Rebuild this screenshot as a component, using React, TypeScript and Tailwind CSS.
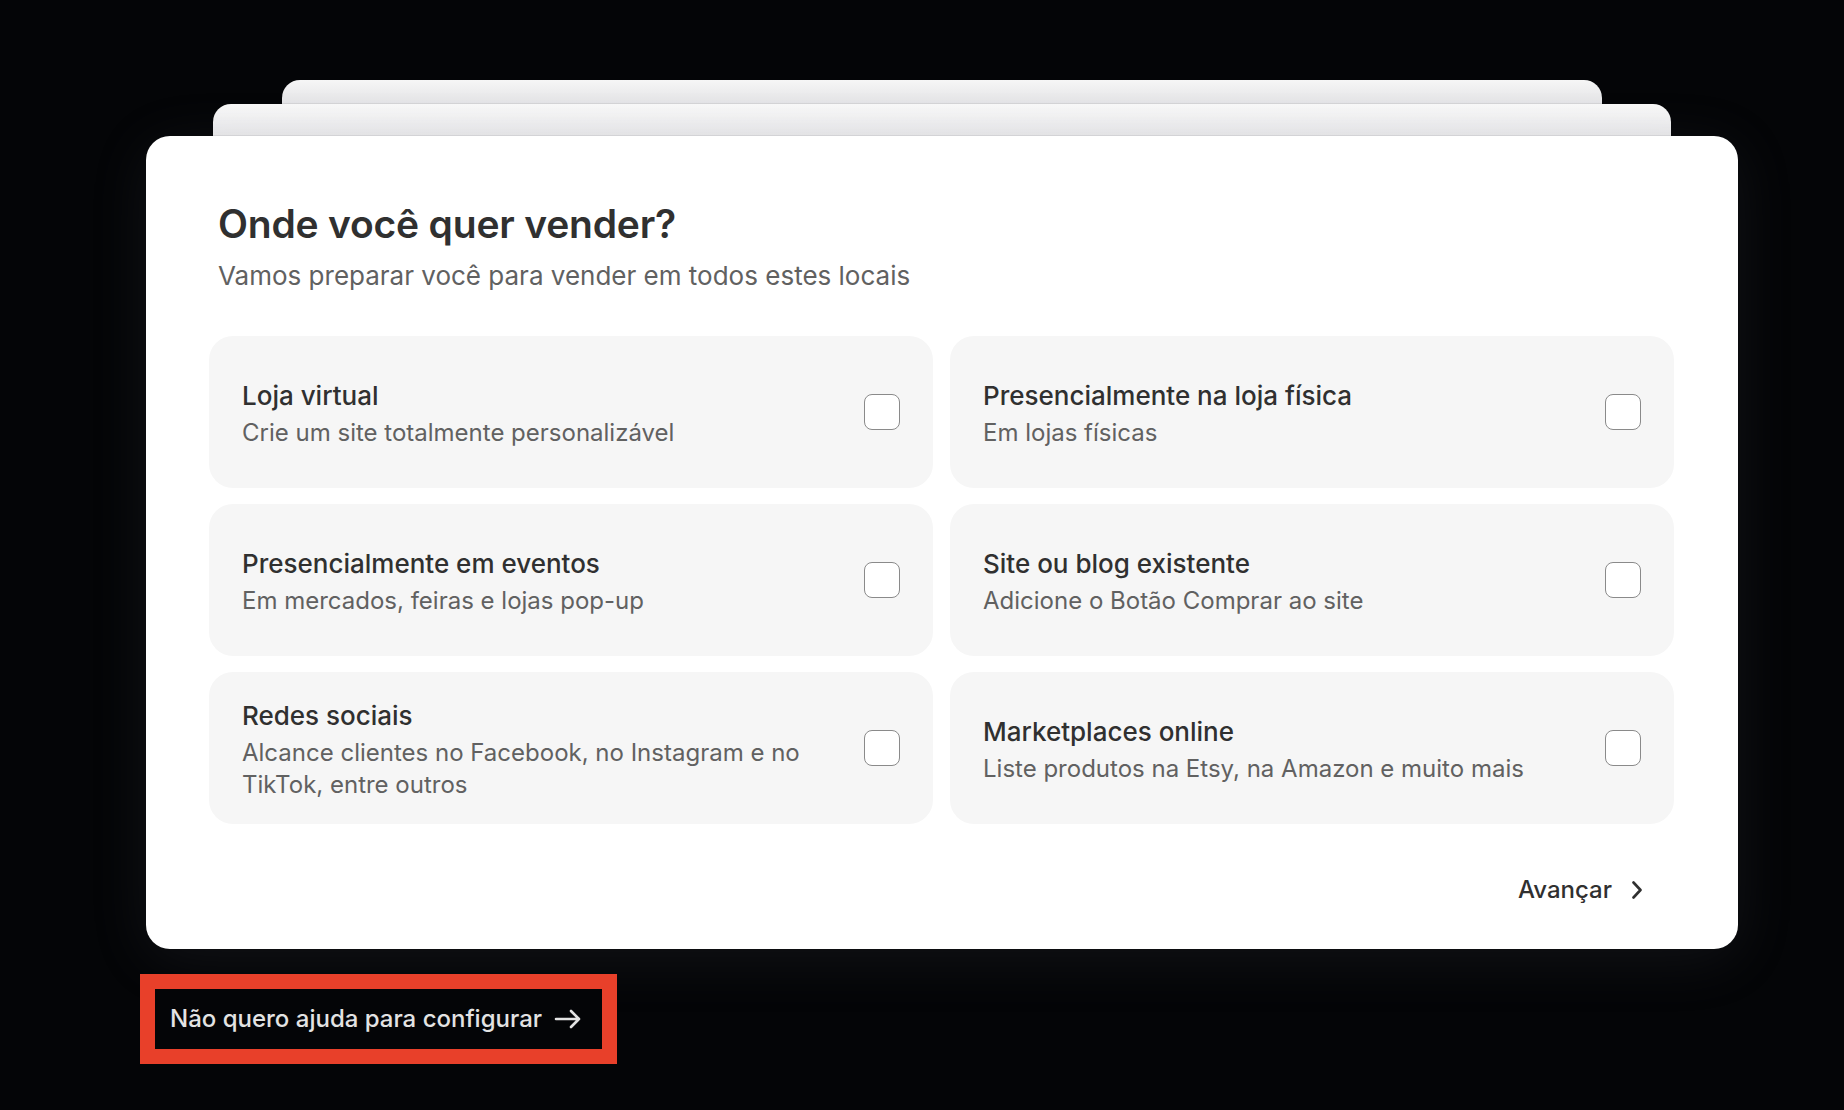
import React from "react";

const options = [
  { title: "Loja virtual", sub: "Crie um site totalmente personalizável" },
  { title: "Presencialmente na loja física", sub: "Em lojas físicas" },
  { title: "Presencialmente em eventos", sub: "Em mercados, feiras e lojas pop-up" },
  { title: "Site ou blog existente", sub: "Adicione o Botão Comprar ao site" },
  { title: "Redes sociais", sub: "Alcance clientes no Facebook, no Instagram e no TikTok, entre outros" },
  { title: "Marketplaces online", sub: "Liste produtos na Etsy, na Amazon e muito mais" },
];

export default function App() {
  return (
    <div
      className="w-full h-[1110px] bg-[#040507] overflow-hidden"
      style={{ fontFamily: "Inter, 'Noto Sans', sans-serif" }}
    >
      <div className="ml-[146px] w-[1592px] pt-[80px]">
        {/* stacked cards behind */}
        <div className="mx-[136px] h-[24px] rounded-t-[18px] bg-gradient-to-b from-[#f6f6f6] to-[#e4e4e6] border-b border-[#d4d4d6]" />
        <div className="mx-[67px] h-[32px] rounded-t-[18px] bg-gradient-to-b from-[#f9f9f9] to-[#e8e8ea] border-b border-[#d8d8da]" />
        {/* main card */}
        <div className="h-[813px] rounded-[24px] bg-white pt-[64px] pl-[63px] pr-[64px] shadow-[0_10px_60px_rgba(120,125,140,0.12)]">
          <div className="pl-[9px]">
            <h1 className="text-[39px] leading-[48px] font-semibold text-[#303030] tracking-[-0.2px]">
              Onde você quer vender?
            </h1>
            <p className="mt-[12px] text-[26px] leading-[32px] text-[#616161]">
              Vamos preparar você para vender em todos estes locais
            </p>
          </div>
          <div className="mt-[44px] grid grid-cols-2 gap-x-[17px] gap-y-[16px]">
            {options.map((o) => (
              <div
                key={o.title}
                className="h-[152px] rounded-[24px] bg-[#f6f6f6] flex items-center justify-between pl-[33px] pr-[33px]"
              >
                <div className="max-w-[585px] pt-[4px]">
                  <div className="text-[26px] leading-[32px] font-medium text-[#303030]">{o.title}</div>
                  <div className="mt-[5px] text-[24px] leading-[32px] text-[#616161]">{o.sub}</div>
                </div>
                <div className="w-[36px] h-[36px] shrink-0 rounded-[8px] border-[1.5px] border-[#8a8a8a] bg-white" />
              </div>
            ))}
          </div>
          <div className="mt-[50px] flex justify-end pr-[31px]">
            <div className="flex items-center gap-[19px] text-[24px] leading-[32px] font-medium text-[#303030]">
              <span>Avançar</span>
              <svg width="12" height="18" viewBox="0 0 12 18" fill="none">
                <path d="M2.5 1.5L9.5 9L2.5 16.5" stroke="#303030" strokeWidth="2.6" strokeLinecap="round" strokeLinejoin="round" />
              </svg>
            </div>
          </div>
        </div>
      </div>
      <div className="ml-[140px] mt-[25px] w-[477px] h-[90px] border-[15px] border-[#e8402a] bg-[#040507] flex items-center pl-[15px]">
        <span className="text-[24px] leading-[32px] font-medium text-[#e3e3e3]">Não quero ajuda para configurar</span>
        <svg className="ml-[12px]" width="28" height="20" viewBox="0 0 28 20" fill="none">
          <path d="M2 10H25M17 2L25 10L17 18" stroke="#e3e3e3" strokeWidth="2.6" strokeLinecap="round" strokeLinejoin="round" />
        </svg>
      </div>
    </div>
  );
}
